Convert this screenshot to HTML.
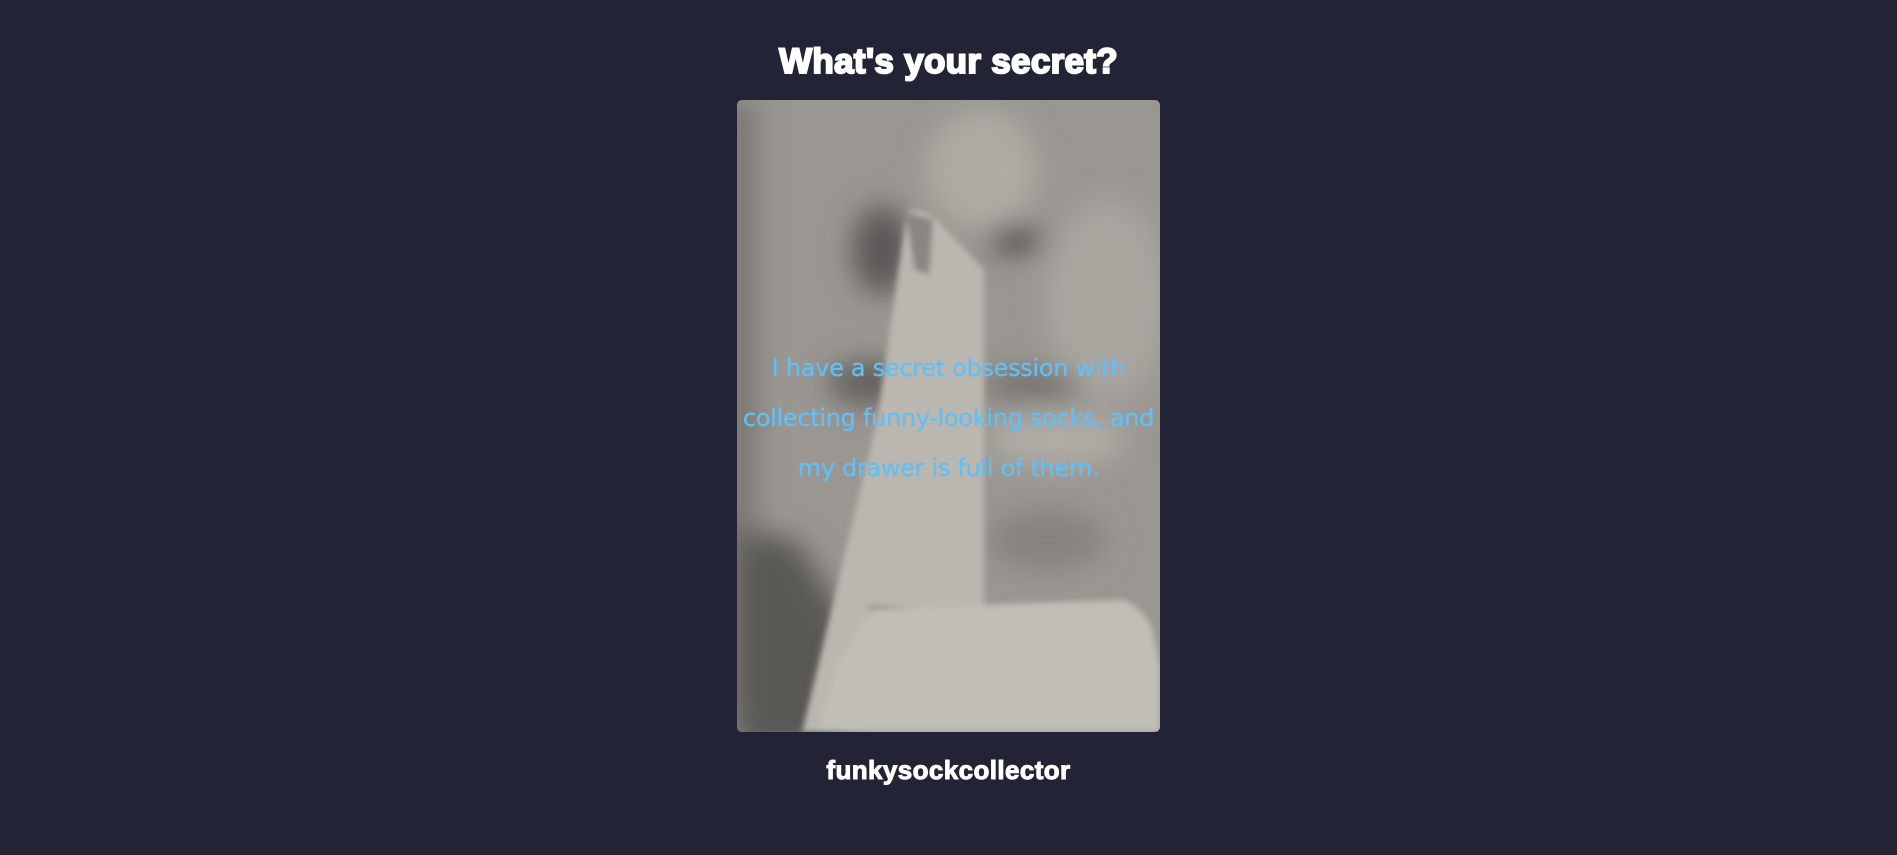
<!DOCTYPE html>
<html><head><meta charset="utf-8"><style>
html,body{margin:0;padding:0;background:#222435;width:1897px;height:855px;overflow:hidden}
body{position:relative;font-family:"Liberation Sans",sans-serif;color:#fff}
.t{position:absolute;left:0;width:1897px;text-align:center;top:40px;font-size:35px;font-weight:900;letter-spacing:0.3px;-webkit-text-stroke:2px #fff;line-height:44px}
.img{position:absolute;left:737px;top:100px;width:423px;height:632px;border-radius:5px;overflow:hidden}
.txt{position:absolute;left:727px;top:343px;width:443px;text-align:center;color:#62bff5;font-size:24px;line-height:50px;font-family:"DejaVu Sans",sans-serif;letter-spacing:-0.3px;-webkit-text-stroke:0.3px #62bff5}
.u{position:absolute;left:0;width:1897px;text-align:center;top:754px;font-size:26px;font-weight:900;letter-spacing:0.4px;-webkit-text-stroke:1px #fff;line-height:32px}
</style></head><body>
<div class="t">What's your secret?</div>
<div class="img"><svg width="423" height="632" viewBox="0 0 423 632">
<defs><filter id="b" x="-50%" y="-50%" width="200%" height="200%"><feGaussianBlur stdDeviation="14"/></filter>
<filter id="b2" x="-50%" y="-50%" width="200%" height="200%"><feGaussianBlur stdDeviation="3"/></filter></defs>
<rect width="423" height="632" fill="#9a9792"/>
<g filter="url(#b)">
<rect x="-20" y="0" width="40" height="632" fill="#7a7772"/>
<path d="M0 430 L60 440 L110 520 L110 650 L0 650 Z" fill="#5a5855"/>
<ellipse cx="245" cy="70" rx="55" ry="60" fill="#aeaba5"/>
<ellipse cx="370" cy="200" rx="60" ry="100" fill="#a9a6a0"/>
<ellipse cx="145" cy="150" rx="30" ry="45" fill="#5b5956"/>
<ellipse cx="278" cy="140" rx="28" ry="13" fill="#4e4c49"/>
<ellipse cx="135" cy="283" rx="45" ry="22" fill="#625f5b"/>
<ellipse cx="295" cy="285" rx="50" ry="12" fill="#6a6864"/>
<ellipse cx="320" cy="340" rx="70" ry="25" fill="#b0ada7"/>
<ellipse cx="310" cy="440" rx="60" ry="30" fill="#858280"/>
</g>
<g filter="url(#b2)">
<path d="M170 112 Q178 106 197 117 L247 170 L247 512 L133 505 L85 632 L65 632 L140 320 Z" fill="#bab6b0"/>
<path d="M240 505 L387 500 Q405 508 415 528 L423 565 L423 632 L80 632 L100 565 L133 510 Z" fill="#c1bdb7"/>
<path d="M168 112 L196 120 L192 175 L178 170 Z" fill="#8a8783"/>
</g>
</svg></div>
<div class="txt">I have a secret obsession with<br>collecting funny-looking socks, and<br>my drawer is full of them.</div>
<div class="u">funkysockcollector</div>
</body></html>
